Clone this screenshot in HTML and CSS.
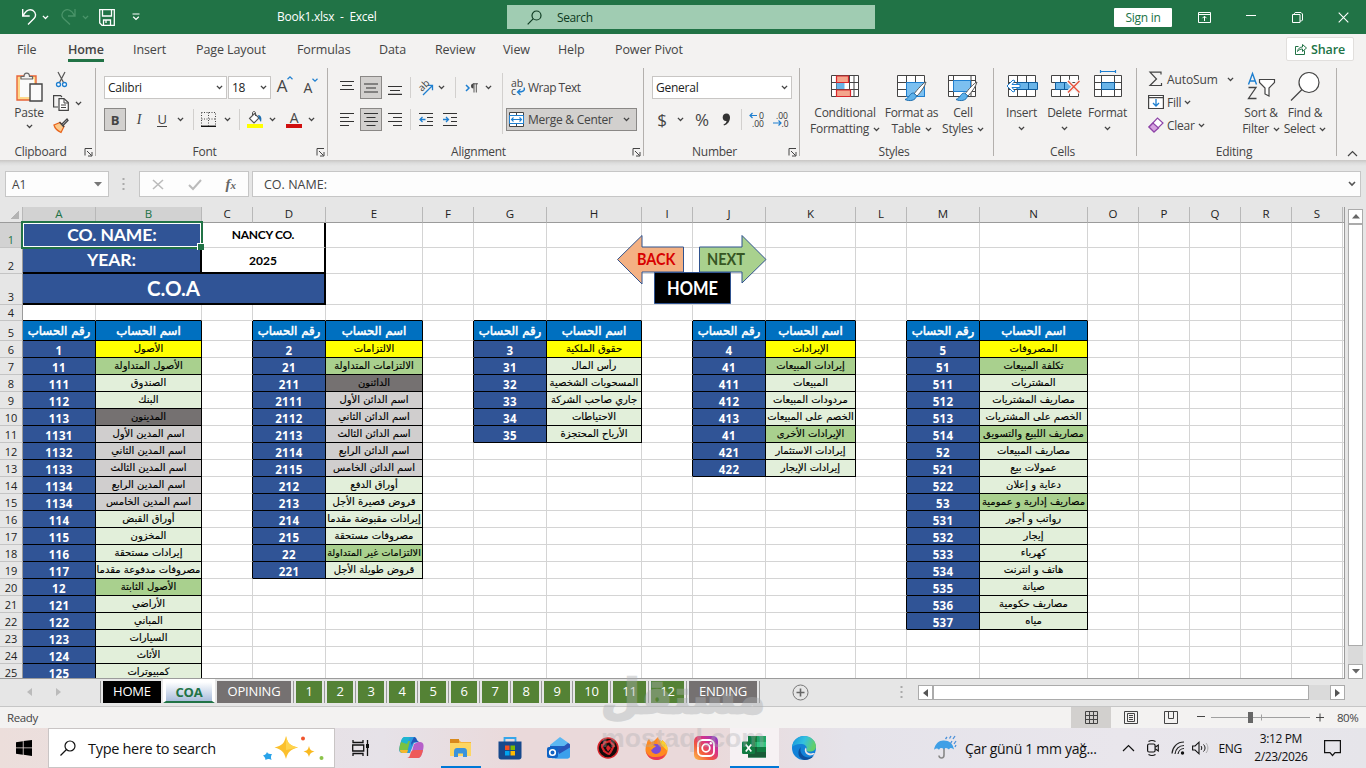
FILE: index.html
```html
<!DOCTYPE html>
<html lang="en">
<head>
<meta charset="utf-8">
<title>Book1.xlsx - Excel</title>
<link rel="stylesheet" href="styles.css">
</head>
<body>
<svg class="defs">
  <symbol id="chev" viewBox="0 0 7 5"><path d="M.9.9 3.5 3.5 6.1.9" fill="none" stroke="currentColor" stroke-width="1.3"/></symbol>
  <symbol id="launch" viewBox="0 0 9 9"><path d="M1 7.500V.5H8M3 3l4.500 4.500M8 4v4H4" fill="none" stroke="#444"/></symbol>
</svg>

<header class="titlebar">
  <div class="qat">
    <svg width="16" height="18" viewBox="0 0 16 18"><path d="M1.700 1v7h7M2.200 7.500C5.500 1.500 9 1 12 2.500c3.500 2.500 3 6 1 8L7 16.500" fill="none" stroke="#fff" stroke-width="1.400"/></svg>
    <svg class="chev" width="7" height="5"><use href="#chev"/></svg>
    <svg class="dim" width="16" height="18" viewBox="0 0 16 18"><path d="M14 1v7H7M13.500 7.500C10 1 6 1 3.500 2.500c-3.500 2.500-3 6-1 8L9 16.500" fill="none" stroke="#4a9469" stroke-width="1.300"/></svg>
    <svg class="chev dim" width="7" height="5"><use href="#chev"/></svg>
    <svg width="16" height="17" viewBox="0 0 16 17"><path d="M.7.7h14.600v15.600H3L.7 14zM3.500 1v6h9V1M4.500 16v-5h7v5M7 11v3" fill="none" stroke="#fff" stroke-width="1.300"/></svg>
    <svg width="8" height="8" viewBox="0 0 8 8"><path d="M.5 1h7M1.200 3.800 4 6.500l2.800-2.700" fill="none" stroke="#fff" stroke-width="1.200"/></svg>
  </div>
  <div class="doc-title">Book1.xlsx&nbsp; - &nbsp;Excel</div>
  <div class="tsearch">
    <svg width="15" height="15" viewBox="0 0 15 15"><circle cx="9.500" cy="5.500" r="4.500" fill="none" stroke="#0e3b22" stroke-width="1.200"/><path d="M6.300 8.700.7 14.300" stroke="#0e3b22" stroke-width="1.200"/></svg>
    <span>Search</span>
  </div>
  <div class="signin">Sign in</div>
  <div class="winbtns">
    <svg width="13" height="11" viewBox="0 0 13 11"><path d="M.5.5h12v10H.5zM.5 2.500h12M6.500 9V4.500M4.500 6.200l2-2 2 2" fill="none" stroke="#fff"/></svg>
    <svg width="10" height="10" viewBox="0 0 10 10"><path d="M0 3.500h10" stroke="#fff"/></svg>
    <svg width="11" height="11" viewBox="0 0 11 11"><path d="M.5 2.500h7.500v8H.5zM2.500 2.500V1.200L3.200.5H9l1.500 1.500v6l-1 1H8" fill="none" stroke="#fff"/></svg>
    <svg width="11" height="11" viewBox="0 0 11 11"><path d="m.7.7 9.600 9.600M10.300.7.7 10.300" stroke="#fff" stroke-width="1.100"/></svg>
  </div>
</header>

<nav class="tabs">
  <span>File</span><span class="on">Home</span><span>Insert</span><span>Page Layout</span><span>Formulas</span><span>Data</span><span>Review</span><span>View</span><span>Help</span><span>Power Pivot</span>
  <div class="share"><svg width="12" height="12" viewBox="0 0 12 12"><path d="M3.500 3.500h-3v8h9V7.500M2.500 8.500c.5-3 2.500-4.500 5-4.500V1.500l4 3.500-4 3.500V6c-2 0-3.500.7-5 2.500z" fill="none" stroke="#217346"/></svg><b>Share</b></div>
</nav>

<section class="ribbon">
  <div class="group g-clip">
    <div class="body">
      <div class="paste">
        <svg width="27" height="30" viewBox="0 0 27 30"><path d="M1 4h19v24H1z" fill="#fdd98b" stroke="#e8643a" stroke-width="1.400"/><path d="M4 7h14v18H4z" fill="#fafafa"/><path d="M5 7V4.500h3C8 0 13.500 0 13.500 4.500h3V7z" fill="#f3f2f1" stroke="#666" stroke-width="1.200"/><path d="M14 12h12v17H14z" fill="#fafafa" stroke="#444" stroke-width="1.400"/></svg>
        <span>Paste</span>
        <svg class="chev" width="7" height="5"><use href="#chev"/></svg>
      </div>
      <div class="clipcol">
        <svg width="11" height="17" viewBox="0 0 11 17"><path d="M2 1l5.500 10.500M9 1 3.500 11.500" stroke="#555" stroke-width="1.200"/><circle cx="2.500" cy="13.500" r="2" fill="#fff" stroke="#1e7fd0" stroke-width="1.300"/><circle cx="8.500" cy="13.500" r="2" fill="#fff" stroke="#1e7fd0" stroke-width="1.300"/></svg>
        <div class="cp"><svg width="16" height="16" viewBox="0 0 16 16"><path d="M5 12H.6V.6h7L9 2" fill="none" stroke="#444" stroke-width="1.200"/><path d="M6 3.600h5l4.300 4v7.800H6z" fill="#fff" stroke="#444" stroke-width="1.200"/><path d="M11 4v4h4M8 10h5M8 12.500h5" fill="none" stroke="#444"/></svg><svg class="chev" width="7" height="5"><use href="#chev"/></svg></div>
        <svg width="16" height="15" viewBox="0 0 16 15"><path d="m1 7 6-2.500 4 4-3 6C5 13 2 11 1 7z" fill="#fbc98a" stroke="#e8641c" stroke-width="1.300"/><path d="m6.500 4 4.500 5M8.500 6.500 14 1l1 1.500-5 5" fill="#fff" stroke="#444" stroke-width="1.300"/></svg>
      </div>
    </div>
    <div class="glabel"><span>Clipboard</span><svg width="9" height="9"><use href="#launch"/></svg></div>
  </div>

  <div class="group g-font">
    <div class="body rows">
      <div class="row f1">
        <div class="combo"><span>Calibri</span><svg class="chev" width="7" height="5"><use href="#chev"/></svg></div>
        <div class="combo"><span>18</span><svg class="chev" width="7" height="5"><use href="#chev"/></svg></div>
        <div class="bigA">A<svg width="6" height="4" viewBox="0 0 6 4"><path d="M.5 3.200 3 .8l2.500 2.400" fill="none" stroke="#1e7fd0" stroke-width="1.200"/></svg></div>
        <div class="bigA sm">A<svg width="6" height="4" viewBox="0 0 6 4"><path d="M.5.8 3 3.200 5.500.8" fill="none" stroke="#1e7fd0" stroke-width="1.200"/></svg></div>
      </div>
      <div class="row f2">
        <div class="pressed"><b>B</b></div><i class="serif">I</i><span class="u">U</span><svg class="chev" width="7" height="5"><use href="#chev"/></svg><div class="vs"></div>
        <svg width="15" height="15" viewBox="0 0 15 15"><path d="M.5.5h14v13M.5.5v13M7.500.5v13M.5 7h14" fill="none" stroke="#444" stroke-dasharray="1 1.500"/><path d="M0 14.300h15" stroke="#111" stroke-width="1.400"/></svg>
        <svg class="chev" width="7" height="5"><use href="#chev"/></svg><div class="vs"></div>
        <svg width="16" height="17" viewBox="0 0 16 17"><path d="m2.500 7.500 5-5 4.500 4.500-5 5z" fill="#fff" stroke="#555" stroke-width="1.100"/><path d="M5.500 4.500V2c0-2 3-2 3 0v3" fill="none" stroke="#555"/><path d="M11 4c3 0 4 3 3 7-1-1-2-3-3-7z" fill="#1e6fb0"/><path d="M0 13h16v4H0z" fill="#ff0"/></svg>
        <svg class="chev" width="7" height="5"><use href="#chev"/></svg><i></i>
        <div class="fontcolor">A</div>
        <svg class="chev" width="7" height="5"><use href="#chev"/></svg>
      </div>
    </div>
    <div class="glabel"><span>Font</span><svg width="9" height="9"><use href="#launch"/></svg></div>
  </div>

  <div class="group g-align">
    <div class="body">
      <div class="rows al">
        <div class="row a1">
          <svg width="14" height="14" viewBox="0 0 14 14"><path d="M0 .5h14M2 4.500h10M0 8.500h14" stroke="#333" stroke-width="1.200"/></svg>
          <div class="pressed"><svg width="14" height="14" viewBox="0 0 14 14"><path d="M0 3h14M2 7h10M0 11h14" stroke="#333" stroke-width="1.200"/></svg></div>
          <svg width="14" height="14" viewBox="0 0 14 14"><path d="M0 5.500h14M2 9.500h10M0 13.300h14" stroke="#333" stroke-width="1.200"/></svg>
          <div class="vs"></div><i></i>
          <svg width="16" height="16" viewBox="0 0 16 16"><path d="m5 15 9-9M9.500 5.300h5v5" fill="none" stroke="#1e7fd0" stroke-width="1.300"/><text x="0" y="0" transform="translate(4 12) rotate(-45)" font-size="10" fill="#444">ab</text></svg>
          <svg class="chev" width="7" height="5"><use href="#chev"/></svg><div class="vs"></div>
          <svg width="13" height="10" viewBox="0 0 13 10"><path d="m1 2 3 3-3 3" fill="none" stroke="#1e7fd0" stroke-width="1.500"/><path d="M8.500.5a2.300 2.300 0 0 0 0 5z" fill="#444"/><path d="M13 .8H8M9 .5v9M11.300.5v9" fill="none" stroke="#444" stroke-width=".9"/></svg>
          <svg class="chev" width="7" height="5"><use href="#chev"/></svg>
        </div>
        <div class="row a2">
          <svg width="14" height="14" viewBox="0 0 14 14"><path d="M0 .5h14M0 4.500h9M0 8.500h14M0 12.500h9" stroke="#333" stroke-width="1.200"/></svg>
          <div class="pressed"><svg width="14" height="14" viewBox="0 0 14 14"><path d="M0 .5h14M2.500 4.500h9M0 8.500h14M2.500 12.500h9" stroke="#333" stroke-width="1.200"/></svg></div>
          <svg width="14" height="14" viewBox="0 0 14 14"><path d="M0 .5h14M5 4.500h9M0 8.500h14M5 12.500h9" stroke="#333" stroke-width="1.200"/></svg>
          <div class="vs"></div>
          <svg width="14" height="14" viewBox="0 0 14 14"><path d="M0 .5h14M8 4.500h6M8 8.500h6M0 12.500h14" stroke="#333" stroke-width="1.200"/><path d="M6.500 6.500H1M3.500 4 1 6.500 3.500 9" fill="none" stroke="#1e7fd0" stroke-width="1.300"/></svg>
          <svg width="14" height="14" viewBox="0 0 14 14"><path d="M0 .5h14M8 4.500h6M8 8.500h6M0 12.500h14" stroke="#333" stroke-width="1.200"/><path d="M0 6.500h5.500M3 4l2.500 2.500L3 9" fill="none" stroke="#1e7fd0" stroke-width="1.300"/></svg>
        </div>
      </div>
      <div class="rows mg">
        <div class="row wrap"><svg width="15" height="18" viewBox="0 0 15 18"><text x="0" y="8" font-size="10.500" fill="#444">ab</text><text x="0" y="16" font-size="10.500" fill="#444">c</text><path d="M13 8.500c1.500 3-1 4.500-6 4.500M9.500 10.200 6.500 13l3 3" fill="none" stroke="#1e7fd0" stroke-width="1.300"/></svg><span>Wrap Text</span></div>
        <div class="row merge"><svg width="15" height="15" viewBox="0 0 15 15"><path d="M.5.5h14v14H.5zM7.500 0v3M7.500 12v3" fill="#fff" stroke="#444"/><path d="M.5 3.500h14v8H.5z" fill="#fff" stroke="#1e7fd0"/><path d="M2.500 7.500h10M4.500 5.500l-2 2 2 2M10.500 5.500l2 2-2 2" fill="none" stroke="#1e7fd0" stroke-width="1.100"/></svg><span>Merge &amp; Center</span><svg class="chev" width="7" height="5"><use href="#chev"/></svg></div>
      </div>
    </div>
    <div class="glabel"><span>Alignment</span><svg width="9" height="9"><use href="#launch"/></svg></div>
  </div>

  <div class="group g-num">
    <div class="body rows">
      <div class="row n1"><div class="combo"><span>General</span><svg class="chev" width="7" height="5"><use href="#chev"/></svg></div></div>
      <div class="row n2"><span class="sym">$</span><svg class="chev" width="7" height="5"><use href="#chev"/></svg><span class="sym">%</span><svg width="9" height="13" viewBox="0 0 9 13"><path d="M4.500.5C7 .5 8 2.500 8 4.500c0 4-2.500 7-6 8l-.5-1c2-1 3-2 3-3.500C2 8.300.7 6.500.7 4.500.7 2 2.300.5 4.500.5z" fill="#333"/></svg><div class="vs"></div>
        <svg class="dec" width="16" height="17" viewBox="0 0 16 17"><path d="M8 4.500H1M3.500 2 1 4.500 3.500 7" fill="none" stroke="#1e7fd0" stroke-width="1.200"/><text x="10" y="7.500" textLength="5" lengthAdjust="spacingAndGlyphs">0</text><text x="3" y="15.500" textLength="12" lengthAdjust="spacingAndGlyphs">.00</text></svg>
        <svg class="dec" width="16" height="17" viewBox="0 0 16 17"><path d="M0 12h8M5.500 9.500 8 12l-2.500 2.500" fill="none" stroke="#1e7fd0" stroke-width="1.200"/><text x="3" y="7.500" textLength="12" lengthAdjust="spacingAndGlyphs">.00</text><text x="8.500" y="15.500" textLength="7" lengthAdjust="spacingAndGlyphs">.0</text></svg>
      </div>
    </div>
    <div class="glabel"><span>Number</span><svg width="9" height="9"><use href="#launch"/></svg></div>
  </div>

  <div class="group g-sty">
    <div class="body bigs">
      <div class="big"><svg width="28" height="29" viewBox="0 0 28 29"><path d="M.5 3.500h27v21H.5zM0 10.500h28M0 17.500h28M5.500 3v22M18.500 3v22M23 3v22" fill="#fff" stroke="#444"/><path d="M5.500 4h12v6.500h-12zM5.500 18h14v6.500h-14z" fill="#f4a58c" stroke="#d8262c" stroke-width="1.200"/><path d="M5.500 11h8v6h-8z" fill="#69b4e8"/></svg><span>Conditional</span><span>Formatting <svg class="chev" width="7" height="5"><use href="#chev"/></svg></span></div>
      <div class="big"><svg width="30" height="29" viewBox="0 0 30 29"><path d="M.5 3.500h27v21H.5zM0 10.500h28M0 17.500h28M9.500 3v22M18.500 3v22" fill="#fff" stroke="#444"/><path d="M9.500 10.500h18v14h-18z" fill="#7cc0f0" stroke="#1e7fd0"/><path d="M29 10c-3 1-9 8-12 12l3 2c4-4 8-10 9-14z" fill="#fff" stroke="#555"/><path d="M16.500 21c-4 0-4 5-8.500 6.500 4 2 11 1.500 11.500-4z" fill="#5fb2ea" stroke="#1e6fb0"/></svg><span>Format as</span><span>Table <svg class="chev" width="7" height="5"><use href="#chev"/></svg></span></div>
      <div class="big"><svg width="30" height="29" viewBox="0 0 30 29"><path d="M.5 3.500h27v21H.5zM0 8.500h28M0 19.500h28M5.500 3v22M23 3v22" fill="#fff" stroke="#444"/><path d="M5.500 8.500h17v11h-17z" fill="#7cc0f0" stroke="#1e7fd0"/><path d="M29 10c-3 1-9 8-12 12l3 2c4-4 8-10 9-14z" fill="#fff" stroke="#555"/><path d="M16.500 21c-4 0-4 5-8.500 6.500 4 2 11 1.500 11.500-4z" fill="#5fb2ea" stroke="#1e6fb0"/></svg><span>Cell</span><span>Styles <svg class="chev" width="7" height="5"><use href="#chev"/></svg></span></div>
    </div>
    <div class="glabel"><span>Styles</span></div>
  </div>

  <div class="group g-cells">
    <div class="body bigs">
      <div class="big"><svg width="32" height="29" viewBox="0 0 32 29"><path d="M2.500 3.500h27v21h-27zM2.500 10.500h27M2.500 17.500h27M11.500 3v22M20.500 3v22" fill="#fff" stroke="#444"/><path d="M11 10.500h20.500v7H11zM22.500 10.500v7" fill="#69b4e8" stroke="#0f5c9c"/><path d="M14 12.500H6l3-3.500-2-1L1 14l6 6 2-1-3-3.500h8z" fill="#fff" stroke="#1e7fd0"/></svg><span>Insert</span><svg class="chev" width="7" height="5"><use href="#chev"/></svg></div>
      <div class="big"><svg width="32" height="29" viewBox="0 0 32 29"><path d="M2.500 3.500h27v7h-27zM2.500 17.500h27v7h-27zM11.500 3v7M20.500 3v7M11.500 17v7M20.500 17v7" fill="#fff" stroke="#444"/><path d="M6.500 10.500h14l2 3.500-2 3.500h-14zM15.500 10v7" fill="#69b4e8" stroke="#0f5c9c"/><path d="m19 9 11.500 11.500M30.500 9 19 20.500" stroke="#f3f2f1" stroke-width="4"/><path d="m19 9 11.500 11.500M30.500 9 19 20.500" stroke="#e8503a" stroke-width="1.400"/></svg><span>Delete</span><svg class="chev" width="7" height="5"><use href="#chev"/></svg></div>
      <div class="big"><svg width="28" height="29" viewBox="0 0 28 29"><path d="M.5 3.500h27v21H.5zM0 10.500h28M0 17.500h28M7.500 3v22M20.500 3v22" fill="#fff" stroke="#444"/><path d="M7.500 10.500h13v7h-13z" fill="#69b4e8" stroke="#0f5c9c"/><path d="M6.500-2v3M21.500-2v3M6.500-.5h15" stroke="#1e7fd0" stroke-width="1.200"/></svg><span>Format</span><svg class="chev" width="7" height="5"><use href="#chev"/></svg></div>
    </div>
    <div class="glabel"><span>Cells</span></div>
  </div>

  <div class="group g-edit">
    <div class="body">
      <div class="edcol">
        <div><svg width="16" height="16" viewBox="0 0 16 16"><path d="M13 3.500V1.200H2L8.500 8 2 14.500h11.500V12" fill="none" stroke="#444" stroke-width="1.200"/></svg><span class="wide">AutoSum</span><svg class="chev" width="7" height="5"><use href="#chev"/></svg></div>
        <div><svg width="16" height="16" viewBox="0 0 16 16"><path d="M.6 1.500h14.800v13H.6zM.6 3.700h14.800" fill="#fff" stroke="#444" stroke-width="1.200"/><path d="M8 5v7M5 9l3 3 3-3" fill="none" stroke="#1e7fd0" stroke-width="1.300"/></svg><span>Fill</span><svg class="chev" width="7" height="5"><use href="#chev"/></svg></div>
        <div><svg width="16" height="16" viewBox="0 0 16 16"><path d="m1 10 8.500-9 5.500 5-9 9z" fill="#fff" stroke="#8e44a8" stroke-width="1.200"/><path d="m1 10 4-4 5.500 5-4.500 4z" fill="#d6a3e0" stroke="#8e44a8" stroke-width="1.200"/></svg><span>Clear</span><svg class="chev" width="7" height="5"><use href="#chev"/></svg></div>
      </div>
      <div class="big"><svg width="29" height="29" viewBox="0 0 29 29"><path d="m1.500 12.500 4-11 4 11M2.800 9h5.500" fill="none" stroke="#1e7fd0" stroke-width="1.400"/><path d="M1.500 15.500H9L1.500 26.500h8" fill="none" stroke="#444" stroke-width="1.300"/><path d="M12.500 7.500h15v3l-5.500 5.500v8l-4-2v-6L12.500 10.500z" fill="#fff" stroke="#444" stroke-width="1.200"/></svg><span>Sort &amp;</span><span>Filter <svg class="chev" width="7" height="5"><use href="#chev"/></svg></span></div>
      <div class="big"><svg width="30" height="29" viewBox="0 0 30 29"><circle cx="19" cy="10.500" r="10" fill="#fff" stroke="#444" stroke-width="1.200"/><path d="M12 17.500 1 28.500" stroke="#444" stroke-width="1.200"/></svg><span>Find &amp;</span><span>Select <svg class="chev" width="7" height="5"><use href="#chev"/></svg></span></div>
    </div>
    <div class="glabel"><span>Editing</span></div>
  </div>
  <svg class="collapse" width="11" height="7" viewBox="0 0 11 7"><path d="m1 6 4.500-4.500L10 6" fill="none" stroke="#444" stroke-width="1.200"/></svg>
</section>

<section class="fbar">
  <div class="namebox"><span>A1</span><svg width="8" height="5" viewBox="0 0 8 5"><path d="M0 0h8L4 4.500z" fill="#777"/></svg></div>
  <svg class="dots" width="3" height="12" viewBox="0 0 3 12"><path d="M.5 0h2v2h-2zM.5 5h2v2h-2zM.5 10h2v2h-2z" fill="#aaa"/></svg>
  <div class="fxbox">
    <svg width="12" height="11" viewBox="0 0 12 11"><path d="m1 1 10 9M11 1 1 10" stroke="#bbb" stroke-width="1.600"/></svg>
    <svg width="14" height="11" viewBox="0 0 14 11"><path d="m1 6 4 4 8-9" fill="none" stroke="#bbb" stroke-width="2"/></svg>
    <i>f<small>x</small></i>
  </div>
  <div class="formula"><span>CO. NAME:</span><svg width="8" height="6" viewBox="0 0 8 6"><path d="m1 1 3 3 3-3" fill="none" stroke="#555" stroke-width="1.600"/></svg></div>
</section>

<main class="sheet">
  <div class="grid" id="grid">
    <div class="sel"></div>
    <svg class="shapes" width="152" height="72" viewBox="0 0 152 72">
      <path d="M.5 24.500 25 .5v11.500H66.500V37H25V49z" fill="#f4b183" stroke="#2f528f"/>
      <path d="M149 24.500 125 .5v11.500H82.500V37H125V48z" fill="#a9d18e" stroke="#2f528f"/>
      <path d="M37.500 37.500h76v31h-76z" fill="#000" stroke="#2f528f"/>
      <text x="20" y="29.500" textLength="38.500" lengthAdjust="spacingAndGlyphs" fill="#d80000">BACK</text>
      <text x="90" y="29.500" textLength="38" lengthAdjust="spacingAndGlyphs" fill="#375623">NEXT</text>
      <text class="hm" x="50" y="60" textLength="51" lengthAdjust="spacingAndGlyphs" fill="#fff">HOME</text>
    </svg>
  </div>
  <div class="vscroll"><div class="sbtn"><svg width="8" height="5" viewBox="0 0 8 5"><path d="M0 4.500h8L4 0z" fill="#666"/></svg></div><div class="vthumb"></div><div class="sbtn"><svg width="8" height="5" viewBox="0 0 8 5"><path d="M0 0h8L4 4.500z" fill="#666"/></svg></div></div>
</main>

<section class="sheettabs">
  <div class="nav"><svg width="5" height="8" viewBox="0 0 5 8"><path d="M5 0v8L0 4z" fill="#bbb"/></svg><svg width="5" height="8" viewBox="0 0 5 8"><path d="M0 0v8l5-4z" fill="#bbb"/></svg></div>
  <div class="stab home">HOME</div><div class="stab coa"><b>COA</b></div><div class="stab grey op">OPINING</div>
  <div class="stab">1</div><div class="stab">2</div><div class="stab">3</div><div class="stab">4</div><div class="stab">5</div><div class="stab">6</div><div class="stab">7</div><div class="stab">8</div><div class="stab">9</div><div class="stab w">10</div><div class="stab w">11</div><div class="stab w">12</div>
  <div class="stab grey en">ENDING</div>
  <svg class="plus" width="17" height="17" viewBox="0 0 17 17"><circle cx="8.500" cy="8.500" r="7.500" fill="none" stroke="#777"/><path d="M8.500 4.500v8M4.500 8.500h8" stroke="#666" stroke-width="1.600"/></svg>
  <svg class="dots" width="3" height="12" viewBox="0 0 3 12"><path d="M.5 0h2v2h-2zM.5 5h2v2h-2zM.5 10h2v2h-2z" fill="#aaa"/></svg>
  <div class="hscroll"><div class="sbtn"><svg width="5" height="8" viewBox="0 0 5 8"><path d="M5 0v8L0 4z" fill="#555"/></svg></div><div class="hthumb"></div><div class="sbtn"><svg width="5" height="8" viewBox="0 0 5 8"><path d="M0 0v8l5-4z" fill="#555"/></svg></div></div>
</section>

<section class="status">
  <span class="ready">Ready</span>
  <div class="view on"><svg width="13" height="13" viewBox="0 0 13 13"><path d="M.5.5h12v12H.5zM4.500 0v13M8.500 0v13M0 4.500h13M0 8.500h13" fill="none" stroke="#444"/></svg></div>
  <div class="view"><svg width="14" height="13" viewBox="0 0 14 13"><path d="M.5.5h13v12H.5zM3.500 2.500h7v8h-7zM5 4.500h4M5 6.500h4M5 8.500h4" fill="none" stroke="#444"/></svg></div>
  <div class="view"><svg width="14" height="13" viewBox="0 0 14 13"><path d="M.5.5h13v12H.5zM4.500 0v7.500M9.500 0v7.500M4.500 7.500H9.500" fill="none" stroke="#444"/></svg></div>
  <svg class="zoom" width="127" height="13" viewBox="0 0 127 13"><path d="M0 5.500h8M119 6.500h8M123 2.500v8" stroke="#444"/><path d="M14 6.500h99M64.500 3.500v6" stroke="#a0a0a0"/><path d="M51 1h5v11h-5z" fill="#666"/></svg>
  <span class="pct">80%</span>
</section>

<footer class="taskbar">
  <div class="start"><svg width="16" height="16" viewBox="0 0 16 16"><path d="M0 2.200 6.800 1.200v6.300H0zM7.600 1.100 16 0v7.500H7.600zM0 8.300h6.800v6.400L0 13.800zM7.600 8.300H16V16l-8.400-1.200z" fill="#000"/></svg></div>
  <div class="search">
    <svg width="16" height="16" viewBox="0 0 16 16"><circle cx="10" cy="6" r="5" fill="none" stroke="#111" stroke-width="1.200"/><path d="M6.500 9.500.5 15.500" stroke="#111" stroke-width="1.300"/></svg>
    <span>Type here to search</span>
    <svg width="62" height="25" viewBox="0 0 62 25"><path d="M23 0c2 8 4 9.500 12 11.500C27 13.500 25 16 23 23c-2-7-4-9.500-11.500-11.500C19 9.500 21 8 23 0z" fill="#fbc02d"/><path d="M23 0c2 8 4 9.500 12 11.500L23 14z" fill="#ffd34d"/><path d="M46 10c1 4 2 4.500 5.500 5.500C48 16.500 47 17.500 46 21c-1-3.500-2-4.500-5.500-5.500C44 14.500 45 14 46 10z" fill="#f9b91f"/><path d="M4 16c1 2 2.500 2 5 2-1 2-1.500 3-.5 6-2-1-3-1.500-6 0 0-2-1-3-2.500-4.500 2-.5 3-1 4-3.500z" fill="#29a3ea"/><circle cx="40" cy="2.500" r="2" fill="#f0542d"/><circle cx="58.500" cy="22" r="2" fill="#8bc34a"/></svg>
  </div>
  <div class="apps">
    <div><svg width="17" height="16" viewBox="0 0 17 16"><path d="M1 0v2.500h10V0M1 16v-2.500h10V16M.7 5h11v6h-11zM15.500 0v16" fill="none" stroke="#111" stroke-width="1.300"/><path d="M14 4h3v4h-3z" fill="#111"/></svg></div>
    <div><svg width="25" height="22" viewBox="0 0 25 22"><path d="M6 0h9c3 0 2 4 5 5l-5 1-4 10H4c-5 0-4-4-3-8S3 0 6 0z" fill="#2a9be0"/><path d="M1 8c1-4 2-4 5-4h5L8 16H4c-4 0-4-4-3-8z" fill="#7ac143"/><path d="M2 5C3 1 4 0 6 0h5L8 7z" fill="#1fb6d0"/><path d="M3 13h6l-1 3H4c-2 0-3-1-3-3z" fill="#f5b82e"/><path d="M19 5h2c4 0 4 4 3 8s-2 8-5 8h-8l4-14z" fill="#b65fc9"/><path d="M15 7l-5 14H8c3 0 3-4 4-6s3-2 6-2h6c-1 4-2 8-5 8h-9z" fill="#ee5a5a"/><path d="M15 0c3 0 2 4 5 5h-4c-2 0-3 2-3 4l-1-3z" fill="#2457b8"/></svg></div>
    <div class="run"><svg width="23" height="20" viewBox="0 0 23 20"><path d="M1 2h9l2 2h10v14H1z" fill="#f5b53c"/><path d="M1 1h9v4H1z" fill="#d98a1c"/><path d="M1 5h21v13H1z" fill="#fdd663"/><path d="M5 19v-5c0-3 1-4 3-4h7c2 0 3 1 3 4v5h-4v-3.500H9V19z" fill="#3b93dc"/></svg></div>
    <div><svg width="24" height="24" viewBox="0 0 24 24"><path d="M6.500 6V2h11v4" fill="none" stroke="#35a6ea" stroke-width="1.800"/><path d="M.5 5.500h23V21c0 1.500-1 2.500-2.500 2.500H3C1.500 23.500.5 22.500.5 21z" fill="#17498c"/><path d="M7 9.500h4.500V14H7z" fill="#f25022"/><path d="M12.500 9.500H17V14h-4.500z" fill="#7fba00"/><path d="M7 15h4.500v4.500H7z" fill="#00a4ef"/><path d="M12.500 15H17v4.500h-4.500z" fill="#ffb900"/></svg></div>
    <div><svg width="24" height="22" viewBox="0 0 24 22"><path d="M3 8 13 0l10 7v12c0 1.500-1 2.500-2.500 2.500H5z" fill="#5cb8f2"/><path d="M3 9h20L12 16 3 12z" fill="#1f5fc0"/><path d="m10 16 13-9v12c0 1.500-1 2.500-2.500 2.500H8z" fill="#3ba0ec"/><path d="M11 14 21 6l2 1.500v3L12 17z" fill="#2a54b8"/><rect x="0" y="10" width="11" height="11" rx="2" fill="#0f63c4"/><circle cx="5.500" cy="15.500" r="2.800" fill="none" stroke="#fff" stroke-width="1.600"/></svg></div>
    <div><svg width="22" height="22" viewBox="0 0 22 22"><circle cx="11" cy="11" r="10" fill="#140c0c" stroke="#d9262c" stroke-width="1.500"/><path d="M8 5c2 1 3-1 5-1 0 2 3 2 4 5-2 2-2 5-5 8-2 0-3-2-5-3 0-2-3-3-2-6 2 0 2-2 3-3z" fill="none" stroke="#d9262c" stroke-width="2.200"/><path d="M11 8l3 3-3 3.500-2-3.500z" fill="#d9262c"/></svg></div>
    <div><svg width="23" height="23" viewBox="0 0 23 23"><path d="M2 6c0-2 1-3 2-4l2 3 3-1 4-4c0 3 3 3 4 5V3c4 3 6 6 5.500 11-.5 5-5 9-11 9S.5 18 .5 13C.5 10 1 8 2 6z" fill="#ff8a1f"/><path d="M13 0c0 3 3 3 4 5V3c4 3 6 6 5.500 11l-6-6z" fill="#ffd02e"/><path d="M1 14c2 6 6 6 10 6s8-1 10-4c-2 5-5 7-9.500 7C6 23 1.500 19 1 14z" fill="#e8385a"/><circle cx="11" cy="12" r="5" fill="#7b4bd6"/><path d="M4 8c2-1 4 0 7 1-1 2-3 1-4 4-2-1-3-3-3-5z" fill="#ff9a1f"/></svg></div>
    <div><svg width="24" height="24" viewBox="0 0 24 24"><defs><linearGradient id="ig" x1="0" y1="1" x2="1" y2="0"><stop offset="0" stop-color="#fdc04a"/><stop offset=".35" stop-color="#f2583e"/><stop offset=".65" stop-color="#d6308a"/><stop offset="1" stop-color="#7b3fd0"/></linearGradient></defs><rect width="24" height="24" rx="5" fill="url(#ig)"/><rect x="4" y="4" width="16" height="16" rx="4.500" fill="none" stroke="#fff" stroke-width="1.800"/><circle cx="12" cy="12" r="3.800" fill="none" stroke="#fff" stroke-width="1.800"/><circle cx="16.800" cy="7.200" r="1.200" fill="#fff"/></svg></div>
    <div class="active"><svg width="25" height="22" viewBox="0 0 25 22"><path d="M6 1.500C6 .5 6.500 0 7.500 0H24v21.500H6z" fill="#21a366"/><path d="M6 0h9v6H6z" fill="#107c41"/><path d="M15 6h9v5h-9z" fill="#33c481"/><path d="M15 11h9v10.500H6V11z" fill="#185c37"/><path d="M15 11h9v5h-9z" fill="#107c41"/><rect y="5.500" width="13" height="12.500" rx="1.200" fill="#107c41"/><path d="m3.800 8.500 5.500 7M9.300 8.500l-5.500 7" stroke="#fff" stroke-width="1.700"/></svg></div>
    <div><svg width="24" height="24" viewBox="0 0 24 24"><defs><linearGradient id="eg" x1="0" y1="0" x2="1" y2=".3"><stop offset="0" stop-color="#1593dc"/><stop offset=".55" stop-color="#33c0e0"/><stop offset="1" stop-color="#62cf6a"/></linearGradient></defs><circle cx="12" cy="12" r="12" fill="#1382d8"/><path d="M0 11C1 4 6 0 12 0c7 0 12 5 12 10.500 0 4-4 5.500-7.500 5-2-.3-2.500-1-2-2 1-2-.5-5-4.500-5.500C5.500 7.500 1.500 9 0 11z" fill="url(#eg)"/><path d="M9 11c-2 4 1 10 7 10.500 2 0 4-.5 6-2C19.500 23 16 24 12.500 24 6 23 4.500 15 9 11z" fill="#0d4f9c"/><path d="M14 11.500c-2.500 2-1 7.500 4 8 2 0 3.500-.7 5-2-.3-.7-1-.7-2-.4-3 1-6-.5-6.500-2.100-.3-1 .3-1.500-.5-3.500z" fill="#e8e4ea"/></svg></div>
  </div>
  <div class="tray">
    <svg class="umb" width="24" height="24" viewBox="0 0 24 24"><path d="M10 5v14c0 4-5 4-5 .5" fill="none" stroke="#888" stroke-width="1.600"/><path d="M0 14C1 7 6 4 10 4.500c5 0 9 3 10 9-2-2-4-2-5 0-2-2-4-2-5 0-2-2-4-2-5 .5-1-2-3.500-2-5 0z" fill="#3f9fe6"/><path d="m13 1-1.500 2M17 0l-1.500 2.500M21 0l-2 3M18 5l-1.500 2.500M22 5l-2 3M22 9l-1 2" stroke="#4a90d9" stroke-width="1.300"/></svg>
    <span class="weather">Çar günü 1 mm yağ...</span>
    <svg width="13" height="8" viewBox="0 0 13 8"><path d="m1 7 5.500-5.500L12 7" fill="none" stroke="#111" stroke-width="1.200"/></svg>
    <svg width="12" height="16" viewBox="0 0 12 16"><rect x=".6" y="4" width="7.500" height="8" rx="1.500" fill="none" stroke="#111" stroke-width="1.200"/><path d="M8.500 7 11.300 5v6L8.500 9M1.500 1.500c2-1.200 5-1.200 7 0M1.500 14.500c2 1.200 5 1.200 7 0" fill="none" stroke="#111" stroke-width="1.100"/></svg>
    <svg class="wifi" width="14" height="14" viewBox="0 0 14 14"><path d="M1 12.500C1.500 6 6 1 13 1M4 13c.5-5 4-8.500 9-8.500M7 13c.5-3 3-5.500 6-5.500" fill="none" stroke="#222" stroke-width="1.200"/><circle cx="11.500" cy="12" r="1.700" fill="#111"/></svg>
    <svg class="vol" width="17" height="14" viewBox="0 0 17 14"><path d="M.6 5h2.500L7 1.200v11.600L3.100 9H.6z" fill="none" stroke="#111" stroke-width="1.100"/><path d="M9 5c1 1 1 3 0 4M11.500 3.500c2 2 2 5 0 7" fill="none" stroke="#111"/><path d="M14 2c2.500 3 2.500 7 0 10" fill="none" stroke="#aaa"/></svg>
    <span class="eng">ENG</span>
    <div class="clock"><span>3:12 PM</span><span>2/23/2026</span></div>
    <svg width="17" height="17" viewBox="0 0 17 17"><path d="M.6.600h15.800v12h-5.400L8.500 15.500 6 12.600H.6z" fill="none" stroke="#111" stroke-width="1.200"/></svg>
  </div>
</footer>

<svg class="watermark" width="200" height="92" viewBox="0 0 200 92">
  <text class="mark" x="182" y="35" direction="rtl" textLength="164" lengthAdjust="spacingAndGlyphs">مستقل</text>
  <text class="dom" x="18" y="69" textLength="164" lengthAdjust="spacingAndGlyphs">mostaql.com</text>
</svg>
<script src="sheet.js"></script>
</body>
</html>
```
FILE: sheet.js
```js
const grid = document.getElementById('grid');
const last = 19, rows = 25;

function put(cls, r, c, text, span) {
  const d = document.createElement('div');
  d.className = cls;
  d.style.gridRow = r + 1;
  d.style.gridColumn = span ? (c + 1) + ' / span ' + span : c + 1;
  if (text !== undefined) {
    const s = document.createElement('span');
    s.textContent = text;
    d.appendChild(s);
  }
  grid.appendChild(d);
  return d;
}

put('corner', 0, 0);
for (let c = 1; c <= last; c++) put('ch' + (c < 3 ? ' hot' : ''), 0, c, String.fromCharCode(64 + c));
put('ch', 0, last + 1);
for (let r = 1; r <= rows; r++) put('rh' + (r === 1 ? ' hot' : ''), r, 0, r);

// y: yellow, g: green, l: light green, d: dark grey, s: silver
const tables = [
  { col: 1, data: [
    ['1','الأصول','y'],['11','الأصول المتداولة','g'],['111','الصندوق','l'],['112','البنك','l'],['113','المدينون','d'],
    ['1131','اسم المدين الأول','s'],['1132','اسم المدين الثاني','s'],['1133','اسم المدين الثالث','s'],['1134','اسم المدين الرابع','s'],['1134','اسم المدين الخامس','s'],
    ['114','أوراق القبض','l'],['115','المخزون','l'],['116','إيرادات مستحقة','l'],['117','مصروفات مدفوعة مقدما','l'],['12','الأصول الثابتة','g'],
    ['121','الأراضي','l'],['122','المباني','l'],['123','السيارات','l'],['124','الأثاث','l'],['125','كمبيوترات','l']] },
  { col: 4, data: [
    ['2','الالتزامات','y'],['21','الالتزامات المتداولة','g'],['211','الدائنون','d'],['2111','اسم الدائن الأول','s'],['2112','اسم الدائن الثاني','s'],
    ['2113','اسم الدائن الثالث','s'],['2114','اسم الدائن الرابع','s'],['2115','اسم الدائن الخامس','s'],['212','أوراق الدفع','l'],['213','قروض قصيرة الأجل','l'],
    ['214','إيرادات مقبوضة مقدما','l'],['215','مصروفات مستحقة','l'],['22','الالتزامات غير المتداولة','g tight'],['221','قروض طويلة الأجل','l']] },
  { col: 7, data: [
    ['3','حقوق الملكية','y'],['31','رأس المال','l'],['32','المسحوبات الشخصية','l'],['33','جاري صاحب الشركة','l'],['34','الاحتياطات','l'],['35','الأرباح المحتجزة','l']] },
  { col: 10, data: [
    ['4','الإيرادات','y'],['41','إيرادات المبيعات','g'],['411','المبيعات','l'],['412','مردودات المبيعات','l'],['413','الخصم على المبيعات','l'],
    ['41','الإيرادات الأخرى','g'],['421','إيرادات الاستثمار','l'],['422','إيرادات الإيجار','l']] },
  { col: 13, data: [
    ['5','المصروفات','y'],['51','تكلفة المبيعات','g'],['511','المشتريات','l'],['512','مصاريف المشتريات','l'],['513','الخصم على المشتريات','l'],
    ['514','مصاريف اللبيع والتسويق','g'],['52','مصاريف المبيعات','l'],['521','عمولات بيع','l'],['522','دعاية و إعلان','l'],['53','مصاريف إدارية و عمومية','g'],
    ['531','رواتب و أجور','l'],['532','إيجار','l'],['533','كهرباء','l'],['534','هاتف و انترنت','l'],['535','صيانة','l'],['536','مصاريف حكومية','l'],['537','مياه','l']] }
];

const used = new Set();
for (const t of tables)
  for (let r = 5; r <= 5 + t.data.length; r++) { used.add(r + ',' + t.col); used.add(r + ',' + (t.col + 1)); }
const boxed = (r, c) => used.has(r + ',' + c);

for (let r = 1; r <= rows; r++) {
  for (let c = 1; c <= last + 1; c++) {
    if (boxed(r, c) || (r < 4 && c < 5)) continue;
    put('c' + (boxed(r, c + 1) ? ' br' : '') + (boxed(r + 1, c) ? ' bb' : ''), r, c);
  }
}
put('c title', 1, 1, 'CO. NAME:', 2);
put('c co', 1, 3, 'NANCY CO.', 2);
put('c title t2', 2, 1, 'YEAR:', 2);
put('c co co2', 2, 3, '2025', 2);
put('c title t3', 3, 1, 'C.O.A', 4);

for (const t of tables) {
  put('c head', 5, t.col, 'رقم الحساب');
  put('c head', 5, t.col + 1, 'اسم الحساب');
  t.data.forEach((row, i) => {
    put('c num', 6 + i, t.col, row[0]);
    put('c acc ' + row[2], 6 + i, t.col + 1, row[1]);
  });
}
```
FILE: styles.css
```css
* { box-sizing: border-box; }
body { margin: 0; width: 1366px; height: 768px; overflow: hidden; position: relative; background: #e6e6e6; color: #444; font: 12px "Open Sans", "Noto Sans", sans-serif; letter-spacing: -.25px; }
svg { display: block; flex: none; overflow: visible; }
svg text { letter-spacing: 0; }
.defs { position: absolute; width: 0; height: 0; }
.chev { color: #444; }

.titlebar { height: 34px; background: #217346; display: flex; align-items: center; color: #fff; }
.qat { display: flex; align-items: center; padding-left: 21px; width: 277px; }
.qat svg:nth-child(2) { margin: 0 12px 0 5px; }
.qat svg:nth-child(4) { margin: 0 10px 0 5px; }
.qat svg:nth-child(6) { margin-left: 17px; }
.qat .chev { color: #fff; }
.qat .chev.dim { color: #4a9469; }
.doc-title { width: 230px; padding-bottom: 2px; }
.tsearch { width: 368px; height: 24px; background: #a0ccb2; color: #0e3b22; display: flex; align-items: center; padding-left: 20px; gap: 15px; letter-spacing: -.4px; }
.signin { margin-left: 239px; width: 58px; height: 19px; background: #fff; color: #217346; display: flex; align-items: center; justify-content: center; border-radius: 1px; }
.winbtns { display: flex; width: 151px; margin: 0 17px 0 auto; justify-content: space-between; align-items: center; }

.tabs { height: 32px; background: #f3f2f1; display: grid; grid-template-columns: 51px 65px 63px 101px 82px 56px 68px 55px 57px 80px 1fr; padding-left: 17px; align-items: start; justify-items: start; font-size: 12.5px; letter-spacing: -.1px; }
.tabs span { height: 28px; line-height: 31px; white-space: nowrap; }
.tabs .on { font-weight: 600; border-bottom: 3px solid #217346; }
.share { margin: 3px 12px 0 0; justify-self: end; width: 68px; height: 24px; background: #fff; border: 1px solid #e1dfdd; border-radius: 2px; color: #217346; display: flex; align-items: center; justify-content: center; gap: 4px; }
.share b { font-weight: 600; }

.ribbon { height: 94px; background: #f3f2f1; display: flex; }
.group { display: flex; flex-direction: column; height: 94px; background: linear-gradient(#b3b0ad, #b3b0ad) right 0 top 2px / 1px 88px no-repeat; }
.body { height: 78px; display: flex; }
.rows { flex-direction: column; display: flex; padding-top: 10px; gap: 9px; }
.row { height: 23px; display: grid; align-items: center; justify-items: center; }
.glabel { height: 16px; display: flex; align-items: center; padding-right: 3px; }
.glabel span { flex: 1; text-align: center; padding-right: 3px; }
.glabel { transform: none; }
.g-clip { width: 96px; } .g-font { width: 232px; } .g-align { width: 316px; } .g-num { width: 156px; } .g-sty { width: 194px; } .g-cells { width: 143px; } .g-edit { width: 200px; }
.group .glabel span { line-height: 16px; }
.collapse { margin: 84px 0 0 10px; }
.paste { width: 38px; margin-left: 10px; padding-top: 6px; display: flex; flex-direction: column; align-items: center; }
.paste span { height: 22px; line-height: 22px; }
.clipcol { display: flex; flex-direction: column; padding: 5px 0 0 5px; gap: 7px; }
.clipcol > svg:first-child { margin-left: 3px; }
.cp { display: flex; align-items: center; gap: 6px; }
.combo { background: #fff; border: 1px solid #c8c6c4; width: 100%; height: 23px; display: flex; align-items: center; justify-content: space-between; padding: 0 3px; color: #222; }
.f1 { grid-template-columns: 123px 43px 26px 24px; padding-left: 8px; column-gap: 1px; }
.bigA { display: flex; font-size: 17px; line-height: 20px; letter-spacing: 0; padding-bottom: 3px; }
.bigA.sm { font-size: 14px; padding-bottom: 0; }
.f2 { grid-template-columns: 22px 26px 20px 16px 10px 21px 16px 8px 24px 10px 4px 26px 8px; padding-left: 8px; }
.pressed { width: 22px; height: 23px; border: 1px solid #8a8886; background: #d2d0ce; display: flex; align-items: center; justify-content: center; font-size: 13px; }
.serif { font: italic 14px "Liberation Serif", serif; }
.u { font-size: 13px; line-height: 14px; border-bottom: 1px solid #444; }
.vs { width: 1px; height: 21px; background: #d2d0ce; }
.fontcolor { width: 16px; border-bottom: 4px solid #d00f0f; font-size: 14px; line-height: 13px; text-align: center; }
.al { width: 174px; padding-left: 5px; }
.a1 { grid-template-columns: 27px 22px 26px 4px 6px 16px 14px 14px 18px 16px; }
.a2 { grid-template-columns: 27px 22px 26px 4px 28px 20px; }
.mg { border-left: 1px solid #d2d0ce; height: 61px; margin-top: 7px; padding: 3px 0 0 3px; }
.mg .row { display: flex; width: 131px; }
.wrap { padding-left: 5px; gap: 2px; letter-spacing: -.5px; }
.merge { background: #d2d0ce; border: 1px solid #8a8886; padding: 0 6px 0 2px; gap: 4px; }
.merge span { flex: 1; }
.n1 { grid-template-columns: 140px; padding-left: 8px; }
.n2 { grid-template-columns: 20px 16px 28px 20px 10px 22px 26px; padding-left: 8px; }
.sym { font-size: 17px; }
.dec text { font: 9px/1 "Open Sans", sans-serif; fill: #333; }
.big { display: flex; flex-direction: column; align-items: center; white-space: nowrap; padding-top: 6px; }
.big > svg:first-child { margin-bottom: 4px; }
.big span { height: 16px; line-height: 16px; display: flex; align-items: center; gap: 4px; }
.big > .chev { margin-top: 5px; }
.g-sty .big:nth-child(1) { width: 90px; } .g-sty .big:nth-child(2) { width: 43px; } .g-sty .big:nth-child(3) { width: 60px; }
.g-cells .big { width: 43px; } .g-cells .bigs { padding-left: 6px; }
.edcol { width: 102px; padding: 5px 0 0 11px; display: flex; flex-direction: column; gap: 7px; }
.edcol div { display: flex; align-items: center; gap: 3px; height: 16px; }
.edcol .wide { margin-right: 6px; letter-spacing: -.1px; }
.g-edit .big { width: 44px; }
.body + .glabel { margin-top: 0; }
.group > .glabel { height: 16px; }

.fbar { height: 47px; background: linear-gradient(#c8c6c4, #dcdcdc 3px, #e6e6e6 6px); display: flex; padding: 11px 5px 0; align-items: flex-start; letter-spacing: 0; }
.fbar > div { height: 26px; border: 1px solid #c6c6c6; background: #fdfdfd; display: flex; align-items: center; justify-content: space-between; }
.namebox { width: 104px; padding: 0 6px; }
.fbar .dots { margin: 7px 14px 0 13px; }
.fxbox { width: 110px; padding: 0 12px; }
.fxbox i { font: italic bold 15px "Liberation Serif", serif; color: #666; }
.fxbox small { font-size: 11px; }
.formula { flex: 1; margin-left: 3px; padding: 0 4px 0 11px; font-size: 12.5px; }

.sheet { height: 472px; display: flex; }
.grid { position: relative; width: 1345px; height: 472px; overflow: hidden; display: grid; border-bottom: 1px solid #9b9b9b; border-right: 1px solid #9b9b9b;
  grid-template-columns: 23px 73px 106px 51px 73px 97px 51px 73px 95px 51px 73px 90px 51px 73px 108px 51px 51px 51px 51px 51px 2px;
  grid-template-rows: 16px 25px 26px 31px 16px 20px repeat(20, 17px); }
.grid > div > span { white-space: nowrap; }
.c, .ch, .rh { display: flex; align-items: center; justify-content: center; min-width: 0; }
.c { border-right: 1px solid #d4d4d4; border-bottom: 1px solid #d4d4d4; background: #fff; }
.ch, .rh, .corner { background: #e6e6e6; color: #222; font-size: 11px; letter-spacing: 0; }
.ch { border-right: 1px solid #b8b8b8; border-bottom: 1px solid #9b9b9b; font-size: 11.5px; line-height: 14px; padding-bottom: 2px; }
.rh { border-right: 1px solid #9b9b9b; border-bottom: 1px solid #c4c4c4; align-items: flex-end; line-height: 15px; overflow: hidden; }
.hot { background: #d2d2d2; color: #217346; }
.corner { border-right: 1px solid #b8b8b8; border-bottom: 1px solid #9b9b9b; background: linear-gradient(135deg, #e6e6e6 0 50%, #b4b4b4 50%) 11px 4px / 8px 8px no-repeat #e6e6e6; }
.br { border-right-color: #000; } .bb { border-bottom-color: #000; }
.title { background: #305496; color: #fff; font: bold 17.5px Lato, sans-serif; border-color: #000; letter-spacing: -.1px; padding-bottom: 1px; }
.t2 { border-right-width: 2px; border-bottom: 2px solid #000; }
.t3 { font-size: 20.5px; border-right: 2px solid #000; border-bottom: 2px solid #000; }
.co { color: #000; font: bold 12px Lato, sans-serif; letter-spacing: -.3px; border-right: 2px solid #000; padding-bottom: 1px; }
.co2 { border-bottom: 2px solid #000; padding-bottom: 0; letter-spacing: .1px; }
.head, .num, .acc { border-color: #000; }
.head { background: #0070c0; color: #fff; font: 11.8px/16px "DejaVu Sans", sans-serif; -webkit-text-stroke: .5px #fff; letter-spacing: 0; }
.num { background: #305496; color: #fff; font: bold 11.5px/15px "Open Sans", sans-serif; letter-spacing: .3px; padding-top: 2px; }
.acc { color: #000; font: 10px/14px "DejaVu Sans", sans-serif; -webkit-text-stroke: .15px #000; letter-spacing: 0; overflow: hidden; }
.tight { font-size: 9.7px; }
.y { background: #ff0; } .g { background: #a9d08e; } .l { background: #e2efda; } .d { background: #757171; } .s { background: #d0cece; }
.sel { position: absolute; left: 21px; top: 14px; width: 182px; height: 28px; border: 2px solid #217346; z-index: 2; box-shadow: inset 0 0 0 1px #fff; }
.sel::after { content: ""; position: absolute; right: -3px; bottom: -3px; width: 6px; height: 6px; background: #217346; border-left: 1px solid #fff; border-top: 1px solid #fff; }
.shapes { position: absolute; left: 617px; top: 28px; z-index: 2; font: bold 17px Lato, sans-serif; }
.shapes .hm { font-size: 18.5px; }
.vscroll { width: 15px; margin: 2px 0 0 3px; height: 470px; display: flex; flex-direction: column; background: #dadada; }
.sbtn { width: 15px; height: 15px; background: #fff; border: 1px solid #ababab; display: flex; align-items: center; justify-content: center; }
.vthumb { height: 422px; margin-bottom: 18px; background: #fff; border: 1px solid #ababab; }

.sheettabs { height: 28px; background: #e6e6e6; border-bottom: 1px solid #c6c6c6; display: flex; align-items: flex-start; padding-top: 2px; font-size: 13px; letter-spacing: -.2px; }
.nav { width: 101px; height: 22px; display: flex; align-items: center; gap: 24px; padding-left: 27px; border-right: 1px solid #999; margin-right: 2px; }
.stab { width: 26px; height: 22px; margin-right: 5px; background: #548235; color: #fff; display: flex; align-items: center; justify-content: center; line-height: 18px; padding-bottom: 2px; }
.stab:not(.home):not(.coa) { box-shadow: 2px 0 0 #e6e6e6, 3px 0 0 #999; }
.stab.home { width: 58px; background: #000; margin-right: 2px; }
.stab.coa { width: 52px; height: 24px; margin: -2px 2px 0 0; padding: 0; border: 3px solid #fff; border-bottom: 2px solid #217346; background: linear-gradient(#fff, #a9bddb); color: #217346; }
.stab.grey { background: #757171; }
.stab.op { width: 74px; } .stab.en { width: 68px; } .stab.w { width: 33px; }
.plus { margin: 3px 0 0 30px; }
.sheettabs .dots { margin: 5px 15px 0 91px; }
.hscroll { margin-top: 4px; width: 427px; display: flex; background: #dadada; }
.hthumb { width: 376px; height: 15px; margin-right: auto; border: 1px solid #ababab; background: #fff; }

.status { height: 21px; background: #f3f2f1; display: flex; align-items: center; }
.ready { width: 1071px; padding-left: 7px; font-size: 11.5px; letter-spacing: -.4px; }
.view { width: 40px; height: 21px; display: flex; align-items: center; justify-content: center; }
.view.on { background: #d2d0ce; }
.zoom { margin-left: 6px; }
.pct { margin-left: 13px; font-size: 11.5px; letter-spacing: -.5px; }

.taskbar { height: 40px; display: flex; background: linear-gradient(90deg, #ecdedb, #e6e2e8 28%, #ead9da 38%, #ead9da 52%, #e5e3ea 62%, #e9e6ec 82%, #e6e5ea); color: #111; }
.start { width: 48px; display: flex; align-items: center; justify-content: center; }
.search { width: 287px; background: #fff; border: 1px solid #c9c5c5; display: flex; align-items: center; padding-left: 11px; font-size: 14.5px; letter-spacing: -.3px; }
.search span { flex: 1; margin-left: 12px; }
.search > svg:last-child { margin-right: 9px; }
.apps { display: flex; }
.apps div { width: 49px; display: flex; align-items: center; justify-content: center; }
.apps div:first-child { width: 52px; padding-right: 2px; }
.apps .run { background: linear-gradient(#0078d7, #0078d7) center bottom / 40px 2px no-repeat; }
.apps .active { background: #f6f1f3; border-bottom: 2px solid #0078d7; }
.tray { flex: 1; display: flex; align-items: center; margin-left: 106px; }
.weather { font-size: 14px; letter-spacing: -.3px; margin: 0 25px 0 7px; white-space: nowrap; }
.tray > svg { margin-right: 12px; }
.tray > svg.umb { margin-right: 0; }
.tray > svg.wifi { margin-right: 7px; }
.tray > svg.vol { margin-right: 10px; }
.eng { font-size: 12px; letter-spacing: -.4px; }
.clock { width: 78px; display: flex; flex-direction: column; align-items: center; line-height: 18px; font-size: 12px; letter-spacing: -.4px; margin-right: 4px; }

.watermark { position: absolute; left: 583px; top: 678px; fill: #aaadb0; opacity: .42; font-family: "Liberation Sans", sans-serif; font-weight: bold; pointer-events: none; z-index: 5; }
.mark { font: bold 47px "DejaVu Sans", sans-serif; stroke: #aaadb0; stroke-width: 2.5px; }
.dom { font-size: 25px; opacity: .8; }

.g-clip .glabel, .g-font .glabel, .g-align .glabel, .g-num .glabel, .g-sty .glabel, .g-cells .glabel, .g-edit .glabel { padding-top: 0; margin-top: 0; }
```
